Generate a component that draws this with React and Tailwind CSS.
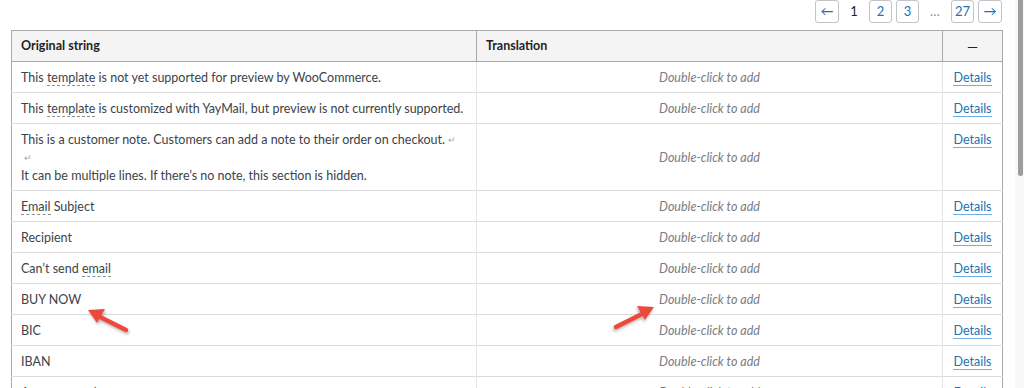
import React from 'react';

const rows = [
  { text: <>This <Term>template</Term> is not yet supported for preview by WooCommerce.</> },
  { text: <>This <Term>template</Term> is customized with YayMail, but preview is not currently supported.</> },
  {
    text: (
      <>
        <div className="h-[18px]">This is a customer note. Customers can add a note to their order on checkout.<Ret /></div>
        <div className="h-[18px]"><Ret /></div>
        <div className="h-[18px]">It can be multiple lines. If there’s no note, this section is hidden.</div>
      </>
    ),
  },
  { text: <><Term>Email</Term> Subject</> },
  { text: 'Recipient' },
  { text: <>Can’t send <Term>email</Term></> },
  { text: 'BUY NOW' },
  { text: 'BIC' },
  { text: 'IBAN' },
  { text: 'Account number' },
];

function Term({ children }) {
  return <span className="border-b border-dashed border-[#8c8f94]">{children}</span>;
}

function Ret() {
  return <span className="ml-[3px] align-top text-[9px] leading-[18px] text-[#a7aaad]">↵</span>;
}

function PageBox({ children, wide }) {
  return (
    <span className={(wide ? 'w-[24px] ' : 'w-[23px] ') + 'flex h-[23px] items-center justify-center rounded-[3px] border border-[#c3c4c7] bg-white text-[13px] text-[#2271b1]'}>
      {children}
    </span>
  );
}

function Arrow({ className }) {
  return (
    <svg className={className} width="50" height="36" viewBox="0 0 50 36">
      <defs>
        <filter id="sh" x="-30%" y="-30%" width="160%" height="160%">
          <feDropShadow dx="1" dy="2" stdDeviation="1.5" floodColor="#000" floodOpacity="0.3" />
        </filter>
      </defs>
      <g filter="url(#sh)">
        <line x1="42" y1="27" x2="12" y2="12" stroke="#ec4a3c" strokeWidth="4.5" strokeLinecap="round" />
        <polygon points="4,7 21,6 13,20" fill="#ec4a3c" />
      </g>
    </svg>
  );
}

export default function App() {
  return (
    <div className="relative flex h-[388px] w-[1024px] overflow-hidden bg-white text-[12.5px] text-[#3c434a]" style={{ fontFamily: 'Lato, sans-serif' }}>
      <div className="w-[1015px] shrink-0 pl-[11px]">
        <div className="flex h-[23px] w-[991px] items-center justify-end gap-[4px] text-[13px]">
          <PageBox wide>←</PageBox>
          <span className="flex w-[22px] justify-center text-[#1d2327]">1</span>
          <PageBox>2</PageBox>
          <PageBox>3</PageBox>
          <span className="flex w-[24px] justify-center text-[#8c8f94]">…</span>
          <PageBox>27</PageBox>
          <PageBox wide>→</PageBox>
        </div>

        <table className="mt-[7px] w-[991px] table-fixed border-collapse border border-[#a7aaad]">
          <colgroup>
            <col className="w-[465px]" />
            <col className="w-[466px]" />
            <col className="w-[60px]" />
          </colgroup>
          <thead>
            <tr className="h-[31px] bg-[#f4f4f4]">
              <th className="border-b border-r border-[#a7aaad] px-[9px] text-left font-bold text-[#1d2327]">Original string</th>
              <th className="border-b border-r border-[#a7aaad] px-[9px] text-left font-bold text-[#1d2327]">Translation</th>
              <th className="border-b border-[#a7aaad] text-center text-[14px] font-normal text-[#1d2327]">—</th>
            </tr>
          </thead>
          <tbody>
            {rows.map((row, i) => (
              <tr key={i} className="border-b border-[#dcdcde]">
                <td className="h-[31px] whitespace-nowrap border-r border-[#e2e4e7] px-[9px] pt-[7px] pb-[5px] align-top leading-[18px]">
                  {row.text}
                </td>
                <td className="border-r border-[#e2e4e7] px-[9px] pt-[2px] text-center align-middle italic leading-[18px] text-[#787c82]">
                  Double-click to add
                </td>
                <td className="pt-[7px] pb-[5px] text-center align-top leading-[18px]">
                  <span className="border-b border-[#72aee6] text-[#2271b1]">Details</span>
                </td>
              </tr>
            ))}
          </tbody>
        </table>
      </div>

      <div className="w-[9px] bg-[#f8f8f8] pl-[3px]">
        <div className="h-[176px] w-[5px] rounded-b-[3px] bg-[#9d9d9d]" />
      </div>

      <Arrow className="absolute left-[84px] top-[303px]" />
      <Arrow className="absolute left-[608px] top-[300px] -scale-x-100" />
    </div>
  );
}
